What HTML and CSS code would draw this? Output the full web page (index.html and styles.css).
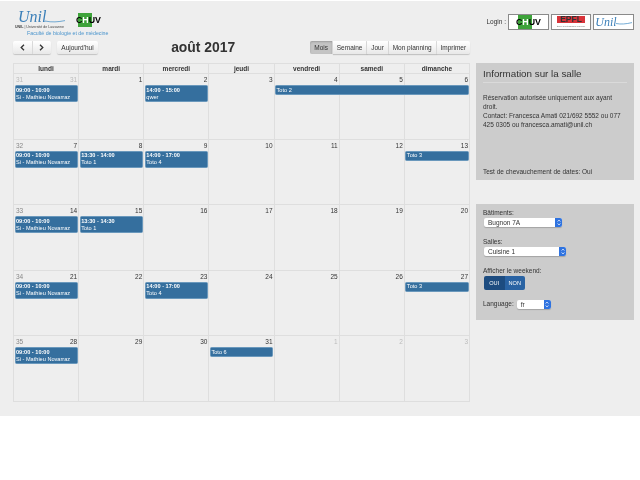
FILE: index.html
```html
<!DOCTYPE html>
<html>
<head>
  <title>Réservation de salles</title>
  <link rel="stylesheet" href="styles.css">
</head>
<body>
  <div class="page">
    <div class="header">
      <div class="brand">
        <div class="brand-logos">
          <div class="unil-logo">
            <div class="unil-mark">
              <span class="unil-word">Unil</span>
              <svg class="unil-swoosh" width="20" height="6" viewBox="0 0 20 6"><path d="M0 4 C7 5.5 13 5 20 3.6" fill="none" stroke="#3b8ac4" stroke-width="0.7"/></svg>
            </div>
            <div class="unil-sub"><b>UNIL</b> | Université de Lausanne</div>
          </div>
          <div class="chuv-logo"><span class="chuv-cross"></span><span class="chuv-word">C<i>H</i>UV</span></div>
        </div>
        <div class="faculty">Faculté de biologie et de médecine</div>
      </div>
      <div class="login">
        <span class="login-label">Login :</span>
        <div class="login-box"><div class="chuv-logo"><span class="chuv-cross"></span><span class="chuv-word">C<i>H</i>UV</span></div></div>
        <div class="login-box login-box-epfl"><div class="epfl-logo"><span class="epfl-word">EPFL</span><span class="epfl-sub">École polytechnique fédérale</span></div></div>
        <div class="login-box"><span class="unil-word">Unil</span><svg class="unil-swoosh-login" width="16" height="6" viewBox="0 0 16 6"><path d="M0 4.5 C5 5.5 10 5 16 3.6" fill="none" stroke="#3b8ac4" stroke-width="0.7"/></svg></div>
      </div>
    </div>

    <div class="main">
      <div class="calendar">
        <div class="toolbar">
          <div class="toolbar-left">
            <div class="btn-group">
              <div class="btn btn-nav"><svg width="5" height="7" viewBox="0 0 5 7"><path d="M4 0.8 L1.2 3.5 L4 6.2" fill="none" stroke="#333" stroke-width="1.3"/></svg></div>
              <div class="btn btn-nav"><svg width="5" height="7" viewBox="0 0 5 7"><path d="M1 0.8 L3.8 3.5 L1 6.2" fill="none" stroke="#333" stroke-width="1.3"/></svg></div>
            </div>
            <div class="btn btn-today">Aujourd'hui</div>
          </div>
          <h2 class="month-title">août 2017</h2>
          <div class="btn-group">
            <div class="btn btn-view active">Mois</div>
            <div class="btn btn-view">Semaine</div>
            <div class="btn btn-view">Jour</div>
            <div class="btn btn-view">Mon planning</div>
            <div class="btn btn-view">Imprimer</div>
          </div>
        </div>

        <div class="grid">
          <div class="day-names">
            <div>lundi</div><div>mardi</div><div>mercredi</div><div>jeudi</div><div>vendredi</div><div>samedi</div><div>dimanche</div>
          </div>

          <div class="week">
            <div class="day c1"><span class="wk other">31</span><span class="num other">31</span></div>
            <div class="day c2"><span class="num">1</span></div>
            <div class="day c3"><span class="num">2</span></div>
            <div class="day c4"><span class="num">3</span></div>
            <div class="day c5"><span class="num">4</span></div>
            <div class="day c6"><span class="num">5</span></div>
            <div class="day c7"><span class="num">6</span></div>
            <div class="event c1"><b>09:00 - 10:00</b><br>Si - Mathieu Novarraz</div>
            <div class="event c3"><b>14:00 - 15:00</b><br>qwer</div>
            <div class="event c5 span3">Toto 2</div>
          </div>

          <div class="week">
            <div class="day c1"><span class="wk">32</span><span class="num">7</span></div>
            <div class="day c2"><span class="num">8</span></div>
            <div class="day c3"><span class="num">9</span></div>
            <div class="day c4"><span class="num">10</span></div>
            <div class="day c5"><span class="num">11</span></div>
            <div class="day c6"><span class="num">12</span></div>
            <div class="day c7"><span class="num">13</span></div>
            <div class="event c1"><b>09:00 - 10:00</b><br>Si - Mathieu Novarraz</div>
            <div class="event c2"><b>13:30 - 14:00</b><br>Toto 1</div>
            <div class="event c3"><b>14:00 - 17:00</b><br>Toto 4</div>
            <div class="event c7">Toto 3</div>
          </div>

          <div class="week">
            <div class="day c1"><span class="wk">33</span><span class="num">14</span></div>
            <div class="day c2"><span class="num">15</span></div>
            <div class="day c3"><span class="num">16</span></div>
            <div class="day c4"><span class="num">17</span></div>
            <div class="day c5"><span class="num">18</span></div>
            <div class="day c6"><span class="num">19</span></div>
            <div class="day c7"><span class="num">20</span></div>
            <div class="event c1"><b>09:00 - 10:00</b><br>Si - Mathieu Novarraz</div>
            <div class="event c2"><b>13:30 - 14:30</b><br>Toto 1</div>
          </div>

          <div class="week">
            <div class="day c1"><span class="wk">34</span><span class="num">21</span></div>
            <div class="day c2"><span class="num">22</span></div>
            <div class="day c3"><span class="num">23</span></div>
            <div class="day c4"><span class="num">24</span></div>
            <div class="day c5"><span class="num">25</span></div>
            <div class="day c6"><span class="num">26</span></div>
            <div class="day c7"><span class="num">27</span></div>
            <div class="event c1"><b>09:00 - 10:00</b><br>Si - Mathieu Novarraz</div>
            <div class="event c3"><b>14:00 - 17:00</b><br>Toto 4</div>
            <div class="event c7">Toto 3</div>
          </div>

          <div class="week">
            <div class="day c1"><span class="wk">35</span><span class="num">28</span></div>
            <div class="day c2"><span class="num">29</span></div>
            <div class="day c3"><span class="num">30</span></div>
            <div class="day c4"><span class="num">31</span></div>
            <div class="day c5"><span class="num other">1</span></div>
            <div class="day c6"><span class="num other">2</span></div>
            <div class="day c7"><span class="num other">3</span></div>
            <div class="event c1"><b>09:00 - 10:00</b><br>Si - Mathieu Novarraz</div>
            <div class="event c4">Toto 6</div>
          </div>
        </div>
      </div>

      <div class="sidebar">
        <div class="panel panel-info">
          <h3 class="panel-title">Information sur la salle</h3>
          <p class="info-text">Réservation autorisée uniquement aux ayant droit.<br>Contact: Francesca Amati 021/692 5552 ou 077 425 0305 ou francesca.amati@unil.ch</p>
          <p class="info-foot">Test de chevauchement de dates: Oui</p>
        </div>
        <div class="panel panel-form">
          <div class="field">
            <div class="field-label">Bâtiments:</div>
            <div class="select select-building">Bugnon 7A<span class="select-arrow"><svg width="4" height="7" viewBox="0 0 4 7"><path d="M0.6 2.6 L2 1 L3.4 2.6 M0.6 4.4 L2 6 L3.4 4.4" fill="none" stroke="#fff" stroke-width="0.7"/></svg></span></div>
          </div>
          <div class="field">
            <div class="field-label">Salles:</div>
            <div class="select select-room">Cuisine 1<span class="select-arrow"><svg width="4" height="7" viewBox="0 0 4 7"><path d="M0.6 2.6 L2 1 L3.4 2.6 M0.6 4.4 L2 6 L3.4 4.4" fill="none" stroke="#fff" stroke-width="0.7"/></svg></span></div>
          </div>
          <div class="field">
            <div class="field-label">Afficher le weekend:</div>
            <div class="toggle"><span class="toggle-on">OUI</span><span class="toggle-off">NON</span></div>
          </div>
          <div class="field field-inline">
            <span class="field-label">Language:</span>
            <div class="select select-lang">fr<span class="select-arrow"><svg width="4" height="7" viewBox="0 0 4 7"><path d="M0.6 2.6 L2 1 L3.4 2.6 M0.6 4.4 L2 6 L3.4 4.4" fill="none" stroke="#fff" stroke-width="0.7"/></svg></span></div>
          </div>
        </div>
      </div>
    </div>
  </div>
</body>
</html>
```

FILE: styles.css
```css
body {
  margin: 0;
  background: #fff;
  font-family: "Liberation Sans", Arial, sans-serif;
  font-size: 6.5px;
  color: #333;
}
.page {
  margin-top: 1px;
  height: 415px;
  background: #eee;
  overflow: hidden;
  filter: blur(0.4px);
}

/* header */
.header {
  display: flex;
  justify-content: space-between;
  height: 39px;
  padding: 9px 6px 0 15px;
  box-sizing: border-box;
}
.brand-logos {
  display: flex;
  gap: 10px;
}
.unil-logo {
  width: 51px;
}
.unil-mark {
  display: flex;
  align-items: flex-end;
  height: 14px;
  padding-left: 3px;
}
.unil-word {
  font-family: "Liberation Serif", serif;
  font-style: italic;
  font-size: 16px;
  line-height: 14px;
  color: #3b7fb8;
}
.unil-swoosh {
  margin-left: -1px;
  margin-bottom: 1px;
}
.unil-sub {
  font-size: 3.6px;
  line-height: 5px;
  margin-top: 1px;
  white-space: nowrap;
  color: #444;
}
.chuv-logo {
  position: relative;
  width: 25px;
  height: 14px;
  margin-top: 3px;
}
.chuv-cross {
  position: absolute;
  left: 2px;
  top: 0;
  width: 14px;
  height: 14px;
  background: #3ea33a;
}
.chuv-word {
  position: absolute;
  left: 0;
  top: 3px;
  font-size: 8.8px;
  line-height: 8px;
  font-weight: bold;
  color: #000;
}
.chuv-word i {
  font-style: normal;
  color: #fff;
}
.faculty {
  margin: 0 0 0 12px;
  font-size: 5.25px;
  line-height: 6px;
  color: #4a94cc;
}
.login {
  display: flex;
  align-items: flex-start;
  gap: 2px;
  padding-top: 4px;
}
.login-label {
  line-height: 16px;
}
.login-box {
  display: flex;
  align-items: center;
  justify-content: center;
  width: 41px;
  height: 16px;
  box-sizing: border-box;
  border: 1px solid #8a8a8a;
  background: #fff;
  overflow: hidden;
}
.login-box-epfl {
  width: 40px;
}
.login-box .chuv-logo {
  margin-top: 0;
}
.login-box .unil-word {
  font-size: 12px;
}
.unil-swoosh-login {
  margin-left: -1px;
}
.epfl-logo {
  width: 28px;
  height: 14px;
  text-align: center;
  background: linear-gradient(#d8333a, #d8333a) 0 1px / 100% 7px no-repeat;
}
.epfl-word {
  display: block;
  font-size: 8.5px;
  line-height: 9px;
  font-weight: bold;
  color: #333;
}
.epfl-sub {
  display: block;
  font-size: 2.2px;
  line-height: 4px;
  color: #666;
  white-space: nowrap;
}

/* calendar */
.main {
  display: flex;
  padding-left: 13px;
  gap: 6px;
}
.calendar {
  width: 457px;
}
.toolbar {
  display: flex;
  justify-content: space-between;
  align-items: center;
  height: 14px;
  margin-bottom: 9px;
}
.toolbar-left {
  display: flex;
  gap: 6px;
}
.btn-group {
  display: flex;
}
.btn {
  display: flex;
  align-items: center;
  justify-content: center;
  height: 13px;
  background: linear-gradient(#fff, #e8e8e8);
  border-right: 1px solid #ddd;
  box-shadow: 0 1px 1px rgba(0, 0, 0, 0.18);
  font-size: 6.5px;
}
.btn-group .btn:first-child {
  border-radius: 2px 0 0 2px;
}
.btn-group .btn:last-child {
  border-right: 0;
  border-radius: 0 2px 2px 0;
}
.btn-nav {
  width: 18.5px;
}
.btn-today {
  width: 41px;
  border-right: 0;
  border-radius: 2px;
}
.btn-view {
  padding: 0 3.9px;
}
.btn-view.active {
  background: #c4c4c4;
  box-shadow: inset 0 1px 2px rgba(0, 0, 0, 0.2);
}
.month-title {
  position: relative;
  left: -1px;
  margin: 0;
  font-size: 13.9px;
  font-weight: bold;
  color: #333;
}

.grid {
  border-left: 1px solid #dedede;
  border-top: 1px solid #dedede;
}
.day-names {
  display: grid;
  grid-template-columns: repeat(7, 1fr);
  height: 9px;
  border-bottom: 1px solid #dedede;
}
.day-names div {
  text-align: center;
  font-weight: bold;
  line-height: 9px;
  border-right: 1px solid #dedede;
}
.week {
  display: grid;
  grid-template-columns: repeat(7, 1fr);
  grid-template-rows: 11px 1fr;
  height: 65.6px;
  box-sizing: border-box;
  border-bottom: 1px solid #dedede;
}
.day {
  display: flex;
  justify-content: space-between;
  grid-row: 1 / 3;
  padding: 2px 1px 0 2px;
  border-right: 1px solid #dedede;
  line-height: 7px;
}
.num {
  margin-left: auto;
}
.wk {
  color: #888;
}
.other {
  color: #bbb;
}
.c1 { grid-column: 1; }
.c2 { grid-column: 2; }
.c3 { grid-column: 3; }
.c4 { grid-column: 4; }
.c5 { grid-column: 5; }
.c6 { grid-column: 6; }
.c7 { grid-column: 7; }
.event.span3 {
  grid-column: 5 / 8;
}
.event {
  grid-row: 2;
  align-self: start;
  margin: 0 1.5px 0 0.5px;
  padding: 0.5px 0.5px;
  background: #356f9e;
  border: 0.5px solid #6a98bc;
  border-radius: 1.5px;
  color: #fff;
  font-size: 5.6px;
  line-height: 7px;
  white-space: nowrap;
  overflow: hidden;
}

/* sidebar */
.sidebar {
  width: 158px;
  display: flex;
  flex-direction: column;
  gap: 24px;
  margin-top: 23px;
}
.panel {
  background: #ccc;
  padding: 0 7px;
  box-sizing: border-box;
}
.panel-info {
  display: flex;
  flex-direction: column;
  height: 117px;
}
.panel-title {
  margin: 0;
  padding: 6px 0 3px;
  font-size: 9.8px;
  line-height: 10px;
  font-weight: normal;
  border-bottom: 1px solid #dadada;
}
.info-text {
  margin: 10px 0 0;
  line-height: 9px;
}
.info-foot {
  margin: auto 0 4px;
  line-height: 9px;
}
.panel-form {
  height: 116px;
  padding-top: 5px;
}
.field {
  height: 29px;
}
.field-label {
  line-height: 8px;
}
.select {
  position: relative;
  height: 9px;
  margin: 1px 0 0 1px;
  padding-left: 4px;
  background: #fff;
  border-radius: 2px;
  line-height: 9px;
  box-shadow: 0 1px 1px rgba(0, 0, 0, 0.2);
}
.select-arrow {
  position: absolute;
  right: 0;
  top: 0;
  display: flex;
  align-items: center;
  justify-content: center;
  width: 7px;
  height: 9px;
  background: #2f73e0;
  border-radius: 0 2px 2px 0;
}
.select-building {
  width: 74px;
}
.select-room {
  width: 78px;
}
.select-lang {
  width: 30px;
  margin: 0 0 0 1px;
}
.toggle {
  display: flex;
  width: 41px;
  height: 14px;
  margin: 1px 0 0 1px;
  color: #fff;
  font-size: 5.6px;
  line-height: 14px;
  text-align: center;
  border-radius: 2px;
  overflow: hidden;
}
.toggle-on {
  flex: 1;
  background: #1d4c80;
}
.toggle-off {
  flex: 1;
  background: #2a63a3;
}
.field-inline {
  display: flex;
  align-items: center;
  gap: 2px;
  height: 10px;
  margin-top: 3px;
}
```
